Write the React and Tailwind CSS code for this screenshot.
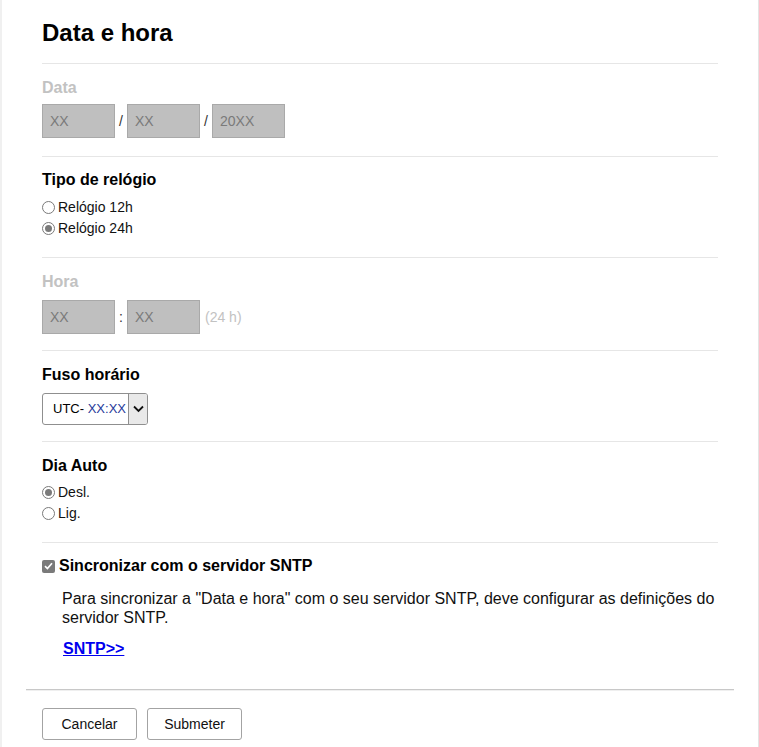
const FONT = { fontFamily: '"Liberation Sans", Arial, sans-serif' };

function Hr({ className = '' }) {
  return <div className={`h-px bg-[#e6e6e6] ${className}`} />;
}

function Label({ children, disabled, className = '' }) {
  return (
    <div className={`text-[16px] leading-[20px] font-bold ${disabled ? 'text-[#c2c2c2]' : 'text-black'} ${className}`}>
      {children}
    </div>
  );
}

function FakeInput({ value }) {
  return (
    <div className="w-[73px] h-[34px] flex items-center pl-[7px] bg-[#bfbfbf] border border-[#a9a9a9] text-[14px] text-[#7a7a7a]">
      {value}
    </div>
  );
}

function Sep({ children }) {
  return <span className="w-[12px] text-center text-[14px] text-[#333]">{children}</span>;
}

function Radio({ checked, label }) {
  return (
    <div className="h-[21px] flex items-start text-[14px] leading-[21px] text-[#111]">
      <span className="mt-[4px] w-[13px] h-[13px] rounded-full border border-[#7a7a7a] bg-white flex items-center justify-center shrink-0">
        {checked && <span className="w-[7px] h-[7px] rounded-full bg-[#7a7a7a]" />}
      </span>
      <span className="ml-[3px]">{label}</span>
    </div>
  );
}

export default function App() {
  return (
    <div className="w-full h-[747px] flex bg-white overflow-hidden" style={FONT}>
      <div className="w-[2px] bg-[#f0f0f0] shrink-0" />
      <div className="flex-1 px-[40px] pt-[19px]">
        <h1 className="text-[24px] leading-[28px] font-bold text-black">Data e hora</h1>
        <Hr className="mt-[16px]" />

        {/* Data */}
        <Label disabled className="mt-[14px]">Data</Label>
        <div className="mt-[6px] flex items-center">
          <FakeInput value="XX" />
          <Sep>/</Sep>
          <FakeInput value="XX" />
          <Sep>/</Sep>
          <FakeInput value="20XX" />
        </div>
        <Hr className="mt-[18px]" />

        {/* Tipo de relógio */}
        <Label className="mt-[13px]">Tipo de relógio</Label>
        <div className="mt-[7px]">
          <Radio label="Relógio 12h" />
          <Radio checked label="Relógio 24h" />
        </div>
        <Hr className="mt-[18px]" />

        {/* Hora */}
        <Label disabled className="mt-[14px]">Hora</Label>
        <div className="mt-[8px] flex items-center">
          <FakeInput value="XX" />
          <Sep>:</Sep>
          <FakeInput value="XX" />
          <span className="ml-[5px] text-[14px] text-[#c2c2c2]">(24 h)</span>
        </div>
        <Hr className="mt-[16px]" />

        {/* Fuso horário */}
        <Label className="mt-[14px]">Fuso horário</Label>
        <div className="mt-[8px] w-[106px] h-[32px] flex border border-[#8f8f8f] rounded-[3px] overflow-hidden bg-white">
          <div className="flex-1 flex items-center pl-[10px] text-[13px] whitespace-nowrap">
            <span className="text-black">UTC-&nbsp;</span>
            <span className="text-[#1f3a9a]">XX:XX</span>
          </div>
          <div className="w-[19px] bg-[#e9e9e9] border-l border-[#8f8f8f] flex items-center justify-center">
            <svg width="11" height="8" viewBox="0 0 11 8" fill="none">
              <path d="M1 1.5L5.5 6L10 1.5" stroke="#111" strokeWidth="1.8" />
            </svg>
          </div>
        </div>
        <Hr className="mt-[16px]" />

        {/* Dia Auto */}
        <Label className="mt-[14px]">Dia Auto</Label>
        <div className="mt-[6px]">
          <Radio checked label="Desl." />
          <Radio label="Lig." />
        </div>
        <Hr className="mt-[18px]" />

        {/* SNTP */}
        <div className="mt-[13px] flex items-center h-[20px]">
          <span className="w-[13px] h-[13px] rounded-[2px] bg-[#7a7a7a] flex items-center justify-center shrink-0">
            <svg width="9" height="8" viewBox="0 0 9 8" fill="none">
              <path d="M1 4.2L3.4 6.5L8 1.2" stroke="#fff" strokeWidth="1.7" />
            </svg>
          </span>
          <span className="ml-[4px] text-[16px] font-bold text-black">Sincronizar com o servidor SNTP</span>
        </div>
        <p className="mt-[13px] pl-[20px] text-[16px] leading-[19px] text-[#111]">
          Para sincronizar a "Data e hora" com o seu servidor SNTP, deve configurar as definições do servidor SNTP.
        </p>
        <a href="#" className="block mt-[12px] ml-[21px] text-[16px] leading-[19px] font-bold text-[#0000ee] underline w-max">
          SNTP&gt;&gt;
        </a>

        <div className="mt-[31px] -mx-[16px] h-[2px] border-t border-[#c8c8c8] border-b border-b-[#efefef]" />
        <div className="mt-[17px] flex gap-[10px]">
          <button className="w-[95px] h-[32px] bg-white border border-[#a3a3a3] rounded-[3px] text-[14px] text-[#111]">
            Cancelar
          </button>
          <button className="w-[95px] h-[32px] bg-white border border-[#a3a3a3] rounded-[3px] text-[14px] text-[#111]">
            Submeter
          </button>
        </div>
      </div>
      <div className="w-px bg-[#e4e4e4] shrink-0" />
    </div>
  );
}
